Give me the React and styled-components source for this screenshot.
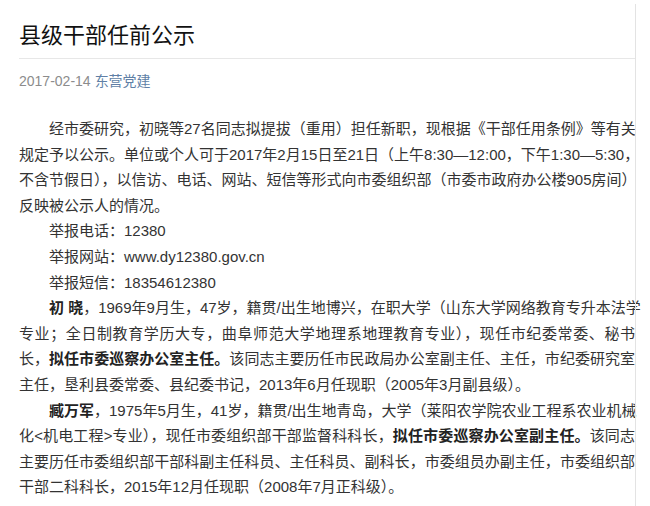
import React from 'react';
import styled, { createGlobalStyle } from 'styled-components';

const Global = createGlobalStyle`
  body { margin: 0; background: #fff; font-family: "Liberation Sans", "Noto Sans CJK SC", sans-serif; }
`;

const Page = styled.div`
  display: flex;
  width: 650px;
  height: 506px;
  overflow: hidden;
`;

const Article = styled.div`
  width: 616px;
  padding: 18px 0 0 19px;
`;

const Side = styled.div`
  flex: 1;
  margin-top: 4px;
  border-left: 1px solid #e3e3e3;
`;

const Title = styled.h1`
  margin: 0;
  font-size: 22px;
  font-weight: normal;
  color: #111;
  line-height: 36px;
  padding-bottom: 4px;
  border-bottom: 1px solid #e7e7e7;
`;

const Meta = styled.div`
  margin: 11px 0 24px;
  font-size: 14px;
  line-height: 22px;
  color: #8c8c8c;
  span { color: #607fa6; margin-left: 4px; }
`;

const P = styled.div`
  font-size: 15px;
  line-height: 25.6px;
  color: #333;
  b { color: #222; }
`;

const Line = styled.span`
  display: block;
  white-space: nowrap;
  padding-left: ${p => (p.$indent ? '30px' : '0')};
  text-align: justify;
  text-align-last: ${p => (p.$last ? 'left' : 'justify')};
`;

export default function App() {
  return (
    <Page>
      <Global />
      <Article>
        <Title>县级干部任前公示</Title>
        <Meta>2017-02-14<span>东营党建</span></Meta>
        <P>
          <Line $indent>经市委研究，初晓等27名同志拟提拔（重用）担任新职，现根据《干部任用条例》等有关</Line>
          <Line>规定予以公示。单位或个人可于2017年2月15日至21日（上午8:30—12:00，下午1:30—5:30，</Line>
          <Line>不含节假日），以信访、电话、网站、短信等形式向市委组织部（市委市政府办公楼905房间）</Line>
          <Line $last>反映被公示人的情况。</Line>
        </P>
        <P><Line $indent $last>举报电话：12380</Line></P>
        <P><Line $indent $last>举报网站：www.dy12380.gov.cn</Line></P>
        <P><Line $indent $last>举报短信：18354612380</Line></P>
        <P>
          <Line $indent><b>初 晓</b>，1969年9月生，47岁，籍贯/出生地博兴，在职大学（山东大学网络教育专升本法学</Line>
          <Line>专业；全日制教育学历大专，曲阜师范大学地理系地理教育专业），现任市纪委常委、秘书</Line>
          <Line>长，<b>拟任市委巡察办公室主任。</b>该同志主要历任市民政局办公室副主任、主任，市纪委研究室</Line>
          <Line $last>主任，垦利县委常委、县纪委书记，2013年6月任现职（2005年3月副县级）。</Line>
        </P>
        <P>
          <Line $indent><b>臧万军</b>，1975年5月生，41岁，籍贯/出生地青岛，大学（莱阳农学院农业工程系农业机械</Line>
          <Line>化&lt;机电工程&gt;专业），现任市委组织部干部监督科科长，<b>拟任市委巡察办公室副主任。</b>该同志</Line>
          <Line>主要历任市委组织部干部科副主任科员、主任科员、副科长，市委组员办副主任，市委组织部</Line>
          <Line $last>干部二科科长，2015年12月任现职（2008年7月正科级）。</Line>
        </P>
      </Article>
      <Side />
    </Page>
  );
}
